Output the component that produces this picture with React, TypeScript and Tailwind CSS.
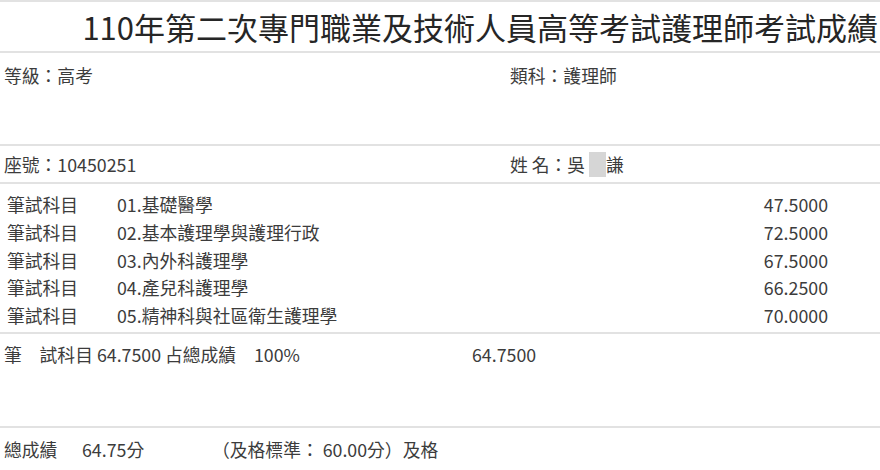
const subjects = [
  { name: "01.基礎醫學", score: "47.5000" },
  { name: "02.基本護理學與護理行政", score: "72.5000" },
  { name: "03.內外科護理學", score: "67.5000" },
  { name: "04.產兒科護理學", score: "66.2500" },
  { name: "05.精神科與社區衛生護理學", score: "70.0000" },
];

const App = () => {
  return (
    <div
      className="w-[880px] h-[470px] overflow-hidden bg-white text-[#3c3c3c] text-[17.8px]"
      style={{ fontFamily: '"Noto Sans CJK TC", "Noto Sans", sans-serif' }}
    >
      {/* Title */}
      <div className="h-[53px] border-t-2 border-b-2 border-[#e2e2e2] flex items-center justify-end pr-[2px]">
        <h1 className="text-[31px] leading-none text-[#262626] whitespace-nowrap">
          110年第二次專門職業及技術人員高等考試護理師考試成績
        </h1>
      </div>

      {/* Level / category */}
      <div className="h-[93px] border-b-2 border-[#e2e2e2] pt-[9px] flex leading-[26px]">
        <div className="w-[510px] pl-[4px]">等級：高考</div>
        <div>類科：護理師</div>
      </div>

      {/* Seat / name */}
      <div className="h-[38px] border-b-2 border-[#e2e2e2] flex items-center leading-[26px]">
        <div className="w-[510px] pl-[4px]">座號：10450251</div>
        <div className="flex items-center whitespace-nowrap">
          <span>姓 名：吳</span>
          <span className="inline-block ml-[4px] w-[17px] h-[25px] bg-[#d6d6d6]"></span>
          <span>謙</span>
        </div>
      </div>

      {/* Subjects */}
      <div className="h-[150px] border-b-2 border-[#e2e2e2] pt-[7px]">
        {subjects.map((s, i) => (
          <div key={i} className="flex leading-[27.75px] pr-[52px]">
            <div className="w-[117px] pl-[7px]">筆試科目</div>
            <div className="flex-1">{s.name}</div>
            <div>{s.score}</div>
          </div>
        ))}
      </div>

      {/* Summary */}
      <div className="h-[94px] border-b-2 border-[#e2e2e2] pt-[7px] flex leading-[26px] whitespace-nowrap">
        <div className="w-[472px] pl-[4px]">筆　試科目 64.7500 占總成績　100%</div>
        <div>64.7500</div>
      </div>

      {/* Total */}
      <div className="pt-[8px] flex leading-[26px] whitespace-nowrap">
        <div className="w-[82px] pl-[4px]">總成績</div>
        <div className="w-[130px]">64.75分</div>
        <div>（及格標準： 60.00分）及格</div>
      </div>
    </div>
  );
};

export default App;
